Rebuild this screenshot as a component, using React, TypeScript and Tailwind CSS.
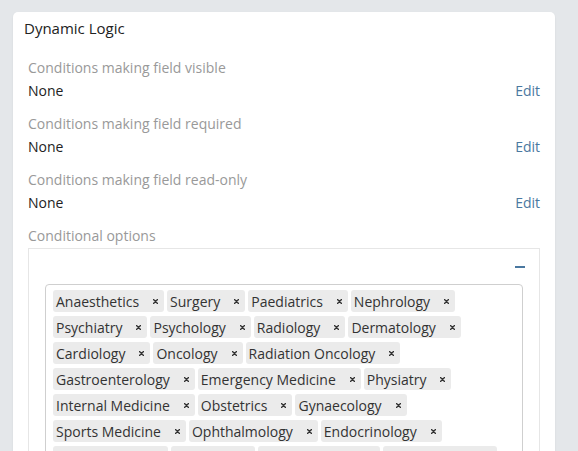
import React from 'react';

const conditions = [
  'Conditions making field visible',
  'Conditions making field required',
  'Conditions making field read-only',
];

const options = [
  'Anaesthetics',
  'Surgery',
  'Paediatrics',
  'Nephrology',
  'Psychiatry',
  'Psychology',
  'Radiology',
  'Dermatology',
  'Cardiology',
  'Oncology',
  'Radiation Oncology',
  'Gastroenterology',
  'Emergency Medicine',
  'Physiatry',
  'Internal Medicine',
  'Obstetrics',
  'Gynaecology',
  'Sports Medicine',
  'Ophthalmology',
  'Endocrinology',
  'Haematology',
  'Genetics',
  'Rheumatology',
  'Pulmonology',
];

function Tag({ label }: { label: string }) {
  return (
    <span className="flex items-center h-[22px] rounded-[3px] bg-[#ebebeb] pl-[3px] pr-[6px] text-[14px] text-[#333]">
      {label}
      <svg className="ml-[14px]" width="5" height="5" viewBox="0 0 5 5">
        <path d="M0.5 0.5L4.5 4.5M4.5 0.5L0.5 4.5" stroke="#333" strokeWidth="1.4" strokeLinecap="round" />
      </svg>
    </span>
  );
}

export default function App() {
  return (
    <div
      className="min-h-screen bg-[#e4e7ea] pl-[13px] pr-[23px] pt-[12px]"
      style={{ fontFamily: '"Open Sans", "Noto Sans", sans-serif' }}
    >
      <div className="rounded-[5px] bg-white px-[15px] pt-[5px] pb-4 shadow-[0_1px_2px_rgba(0,0,0,0.08)]">
        <div className="-ml-[4px] h-[22px] leading-[22px] text-[15px] text-[#222]">Dynamic Logic</div>
        <div className="mt-[18px]">
          {conditions.map((c) => (
            <div key={c} className="mb-[12px]">
              <div className="h-[22px] leading-[22px] text-[14px] text-[#999]">{c}</div>
              <div className="flex h-[22px] items-center justify-between text-[14px]">
                <span className="text-[#222]">None</span>
                <span className="text-[#4a78a0]">Edit</span>
              </div>
            </div>
          ))}
          <div className="h-[22px] leading-[22px] text-[14px] text-[#999]">Conditional options</div>
          <div className="mt-[1px] border border-[#e6e6e6] px-[16px] pt-[8px] pb-4">
            <div className="flex h-[20px] items-center justify-end">
              <span className="-mr-[2px] block h-[2px] w-[10px] bg-[#4a78a0]" />
            </div>
            <div className="mt-[7px] rounded-[4px] border border-[#cfcfcf] pl-[7px] pr-4 py-[5px]">
              <div className="flex flex-wrap gap-x-[3px] gap-y-[4px]">
                {options.map((o) => (
                  <Tag key={o} label={o} />
                ))}
              </div>
            </div>
          </div>
        </div>
      </div>
    </div>
  );
}
